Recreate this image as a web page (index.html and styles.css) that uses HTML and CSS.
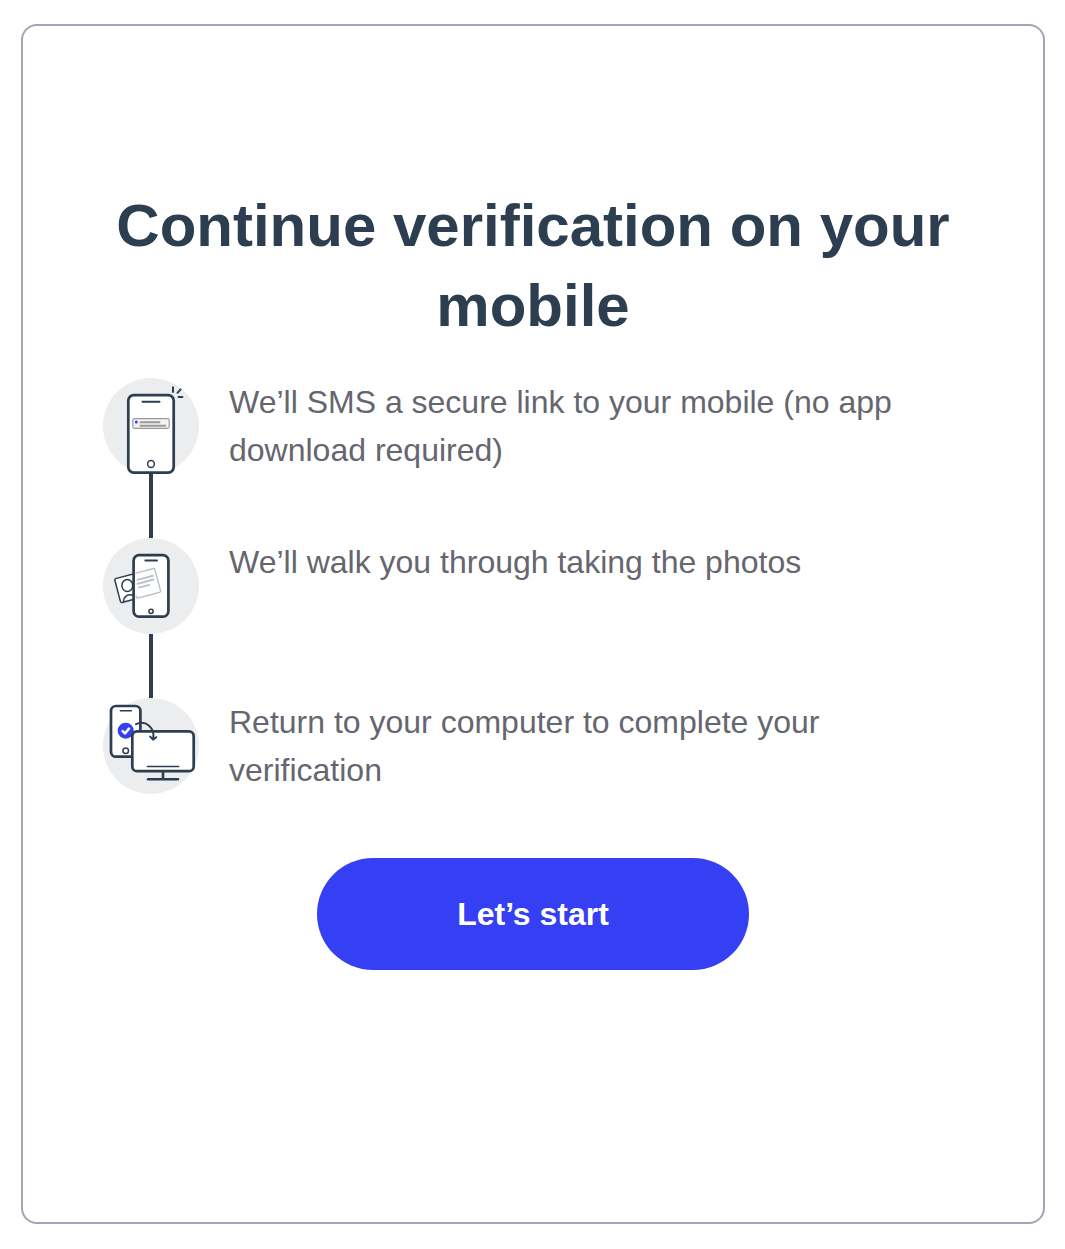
FILE: index.html
```html
<!DOCTYPE html>
<html lang="en">
<head>
<meta charset="utf-8">
<title>Continue verification on your mobile</title>
<link rel="stylesheet" href="styles.css">
</head>
<body>
<main class="card">
  <h1 class="title">Continue verification on your mobile</h1>
  <ol class="steps">
    <li class="step">
      <svg class="icon" viewBox="0 0 96 96" aria-hidden="true">
        <circle class="disc" cx="48" cy="48" r="48"/>
        <rect class="device" x="25.3" y="17.2" width="45.4" height="77.4" rx="5.5"/>
        <path class="line" d="M39.5 23.7H56.5"/>
        <rect class="message" x="29.8" y="40.6" width="36.4" height="9.8" rx="1.8"/>
        <circle class="accent" cx="33.3" cy="44" r="1.5"/>
        <path class="message-text" d="M36.7 44.2H57.3M36.7 47.7H63"/>
        <circle class="line thin" cx="48" cy="86" r="3.4"/>
        <path class="line" d="M70 9.3V14M74.5 14.8L77.6 11.4M75.6 19H79.4"/>
      </svg>
      <p class="text">We’ll SMS a secure link to your mobile (no app download required)</p>
    </li>
    <li class="step">
      <svg class="icon" viewBox="0 0 96 96" aria-hidden="true">
        <circle class="disc" cx="48" cy="48" r="48"/>
        <path class="id-card" d="M33 35.2L12.6 40.6Q11.5 41 11.8 42L17.4 63.4Q17.8 64.7 19 64.4L33 60.8"/>
        <ellipse class="line thin" cx="24.3" cy="47.5" rx="5.4" ry="6"/>
        <path class="line thin" d="M20.6 63.6C20.5 58.5 25 55.5 30 57.3"/>
        <rect class="device" x="30.6" y="17.2" width="34.8" height="61.5" rx="5.5"/>
        <path class="line" d="M42.4 22.4H54"/>
        <path class="ghost" d="M33 35.1L50.6 30.5Q51.5 30.3 51.8 31.2L57.6 53Q57.8 54 56.8 54.3L34.6 60.3L33 58"/>
        <path class="ghost bold" d="M34.6 41.9L49.8 37.8M34.6 45.8L50.5 41.5M36 49.6L46.2 46.9"/>
        <circle class="line thin" cx="48" cy="73.3" r="2.1"/>
      </svg>
      <p class="text">We’ll walk you through taking the photos</p>
    </li>
    <li class="step">
      <svg class="icon" viewBox="0 0 96 96" aria-hidden="true">
        <circle class="disc" cx="48" cy="48" r="48"/>
        <rect class="device" x="8" y="8" width="29.4" height="50.7" rx="5"/>
        <path class="line thin" d="M17.3 12.7H28.3"/>
        <circle class="accent" cx="22.7" cy="32.7" r="8"/>
        <path class="check" d="M19.6 33.2L22 35.4L26 30.6"/>
        <circle class="line thin" cx="22.7" cy="52.7" r="2.8"/>
        <rect class="device" x="29.3" y="33.3" width="61.4" height="39.9" rx="4.8"/>
        <path class="line thin" d="M44.3 68.6H75.7"/>
        <path class="line stand" d="M60 74V81.3M45 81.3H75"/>
        <path class="line" d="M33 26.2C42.5 21.8 51.8 29 50.3 41M47.2 38.6L50 41.6L53.3 39.2"/>
      </svg>
      <p class="text">Return to your computer to complete your verification</p>
    </li>
  </ol>
  <button class="start" type="button">Let’s start</button>
</main>
</body>
</html>
```
FILE: styles.css
```css
* {
  box-sizing: border-box;
}

body {
  margin: 0;
  padding: 24px 20px 25px 21px;
  background: #fff;
  font-family: "Liberation Sans", Arial, sans-serif;
}

.card {
  display: flex;
  flex-direction: column;
  align-items: center;
  height: 1200px;
  padding: 160px 78px 0;
  border: 2px solid #a3a5b4;
  border-radius: 16px;
}

.title {
  margin: 0 0 32px;
  color: #2c3e50;
  font-size: 60px;
  line-height: 80px;
  text-align: center;
}

.steps {
  display: flex;
  flex-direction: column;
  gap: 64px;
  width: 100%;
  margin: 0 0 64px;
  padding: 0 0 0 2px;
  list-style: none;
}

.step {
  position: relative;
  display: flex;
  gap: 30px;
  height: 96px;
}

/* Connector between consecutive step icons */
.step:not(:last-child)::after {
  content: "";
  position: absolute;
  top: 96px;
  left: 46px;
  width: 4px;
  height: 64px;
  background: #2c3e50;
}

.icon {
  flex: none;
  width: 96px;
  height: 96px;
}

.text {
  width: 700px;
  margin: 0;
  color: #65666f;
  font-size: 32px;
  line-height: 48px;
}

.start {
  width: 432px;
  height: 112px;
  padding: 0;
  border: 0;
  border-radius: 56px;
  background: #353ff4;
  color: #fff;
  font: bold 32px/48px "Liberation Sans", Arial, sans-serif;
}

.disc {
  fill: #ebedee;
}

.device {
  fill: #fff;
  stroke: #2c3e50;
  stroke-width: 2.7;
}

.line {
  fill: none;
  stroke: #2c3e50;
  stroke-width: 2;
  stroke-linecap: round;
  stroke-linejoin: round;
}

.thin {
  stroke-width: 1.5;
}

.stand {
  stroke-width: 2.6;
}

.id-card {
  fill: #fff;
  stroke: #2c3e50;
  stroke-width: 1.5;
}

.ghost {
  fill: none;
  stroke: #bcc2c8;
  stroke-width: 1.4;
  stroke-linecap: round;
}

.bold {
  stroke-width: 2;
}

.message {
  fill: #f3f4f5;
  stroke: #999;
  stroke-width: 1.2;
}

.message-text {
  stroke: #999;
  stroke-width: 2;
}

.accent {
  fill: #353ff4;
}

.check {
  fill: none;
  stroke: #fff;
  stroke-width: 2.5;
  stroke-linecap: round;
  stroke-linejoin: round;
}
```
